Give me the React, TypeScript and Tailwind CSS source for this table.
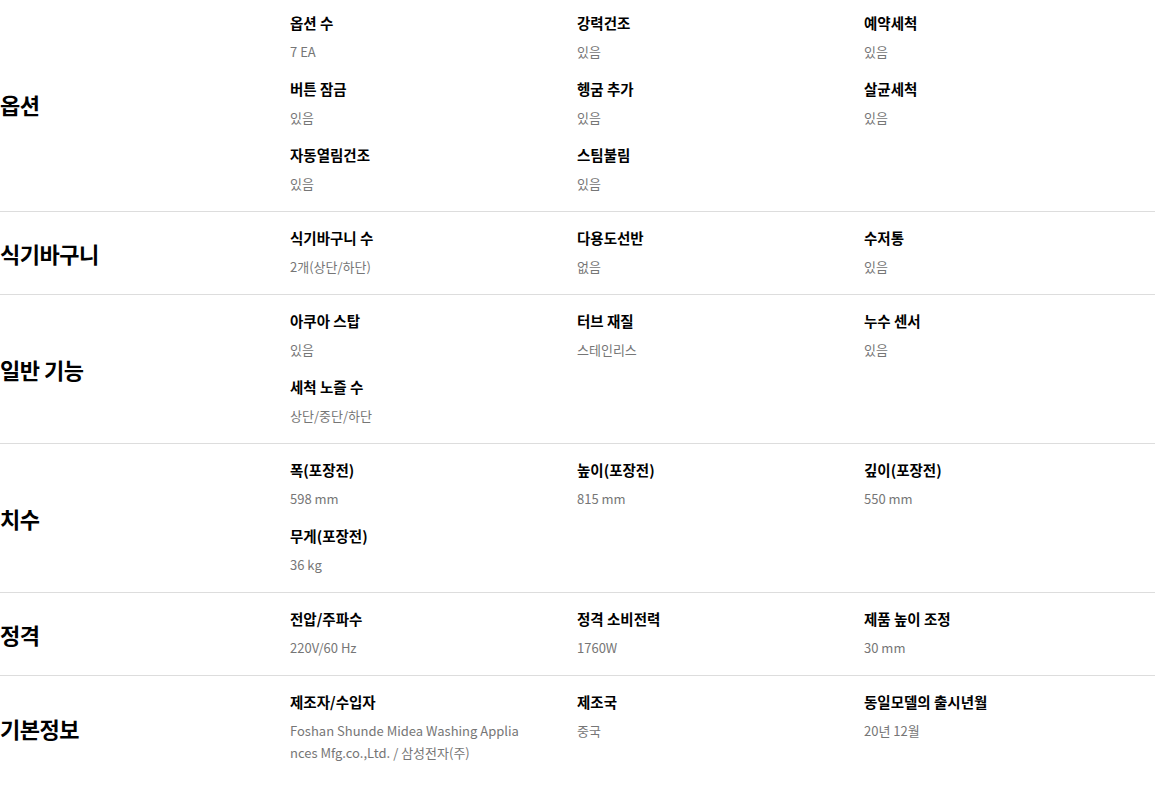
import React from "react";

type Item = { label: string; value: React.ReactNode };
type Section = { title: string; items: Item[]; first?: boolean };

const sections: Section[] = [
  {
    title: "옵션",
    first: true,
    items: [
      { label: "옵션 수", value: "7 EA" },
      { label: "강력건조", value: "있음" },
      { label: "예약세척", value: "있음" },
      { label: "버튼 잠금", value: "있음" },
      { label: "헹굼 추가", value: "있음" },
      { label: "살균세척", value: "있음" },
      { label: "자동열림건조", value: "있음" },
      { label: "스팀불림", value: "있음" },
    ],
  },
  {
    title: "식기바구니",
    items: [
      { label: "식기바구니 수", value: "2개(상단/하단)" },
      { label: "다용도선반", value: "없음" },
      { label: "수저통", value: "있음" },
    ],
  },
  {
    title: "일반 기능",
    items: [
      { label: "아쿠아 스탑", value: "있음" },
      { label: "터브 재질", value: "스테인리스" },
      { label: "누수 센서", value: "있음" },
      { label: "세척 노즐 수", value: "상단/중단/하단" },
    ],
  },
  {
    title: "치수",
    items: [
      { label: "폭(포장전)", value: "598 mm" },
      { label: "높이(포장전)", value: "815 mm" },
      { label: "깊이(포장전)", value: "550 mm" },
      { label: "무게(포장전)", value: "36 kg" },
    ],
  },
  {
    title: "정격",
    items: [
      { label: "전압/주파수", value: "220V/60 Hz" },
      { label: "정격 소비전력", value: "1760W" },
      { label: "제품 높이 조정", value: "30 mm" },
    ],
  },
  {
    title: "기본정보",
    items: [
      {
        label: "제조자/수입자",
        value: (
          <>
            <span className="block whitespace-nowrap">Foshan Shunde Midea Washing Applia</span>
            <span className="block whitespace-nowrap">nces Mfg.co.,Ltd. / 삼성전자(주)</span>
          </>
        ),
      },
      { label: "제조국", value: "중국" },
      { label: "동일모델의 출시년월", value: "20년 12월" },
    ],
  },
];

export default function App() {
  return (
    <div
      className="w-[1155px] bg-white text-black"
      style={{ fontFamily: '"Noto Sans CJK KR", "Noto Sans", sans-serif' }}
    >
      {sections.map((s, i) => (
        <div
          key={s.title}
          className={`flex ${i > 0 ? "border-t border-[#dddddd]" : ""} ${
            s.first ? "pt-[13px]" : "pt-[16px]"
          } pb-[16px]`}
        >
          <div className="w-[290px] shrink-0 flex items-center">
            <h3 className="text-[22px] font-bold leading-[30px] tracking-[-0.5px]">{s.title}</h3>
          </div>
          <div className="grid grid-cols-[287px_287px_287px] gap-y-[16px]">
            {s.items.map((it) => (
              <div key={it.label} className="flex flex-col">
                <div className="text-[14.5px] font-bold leading-[20px] text-black">{it.label}</div>
                <div className="mt-[8px] text-[13px] leading-[22px] text-[#767676]">{it.value}</div>
              </div>
            ))}
          </div>
        </div>
      ))}
    </div>
  );
}
